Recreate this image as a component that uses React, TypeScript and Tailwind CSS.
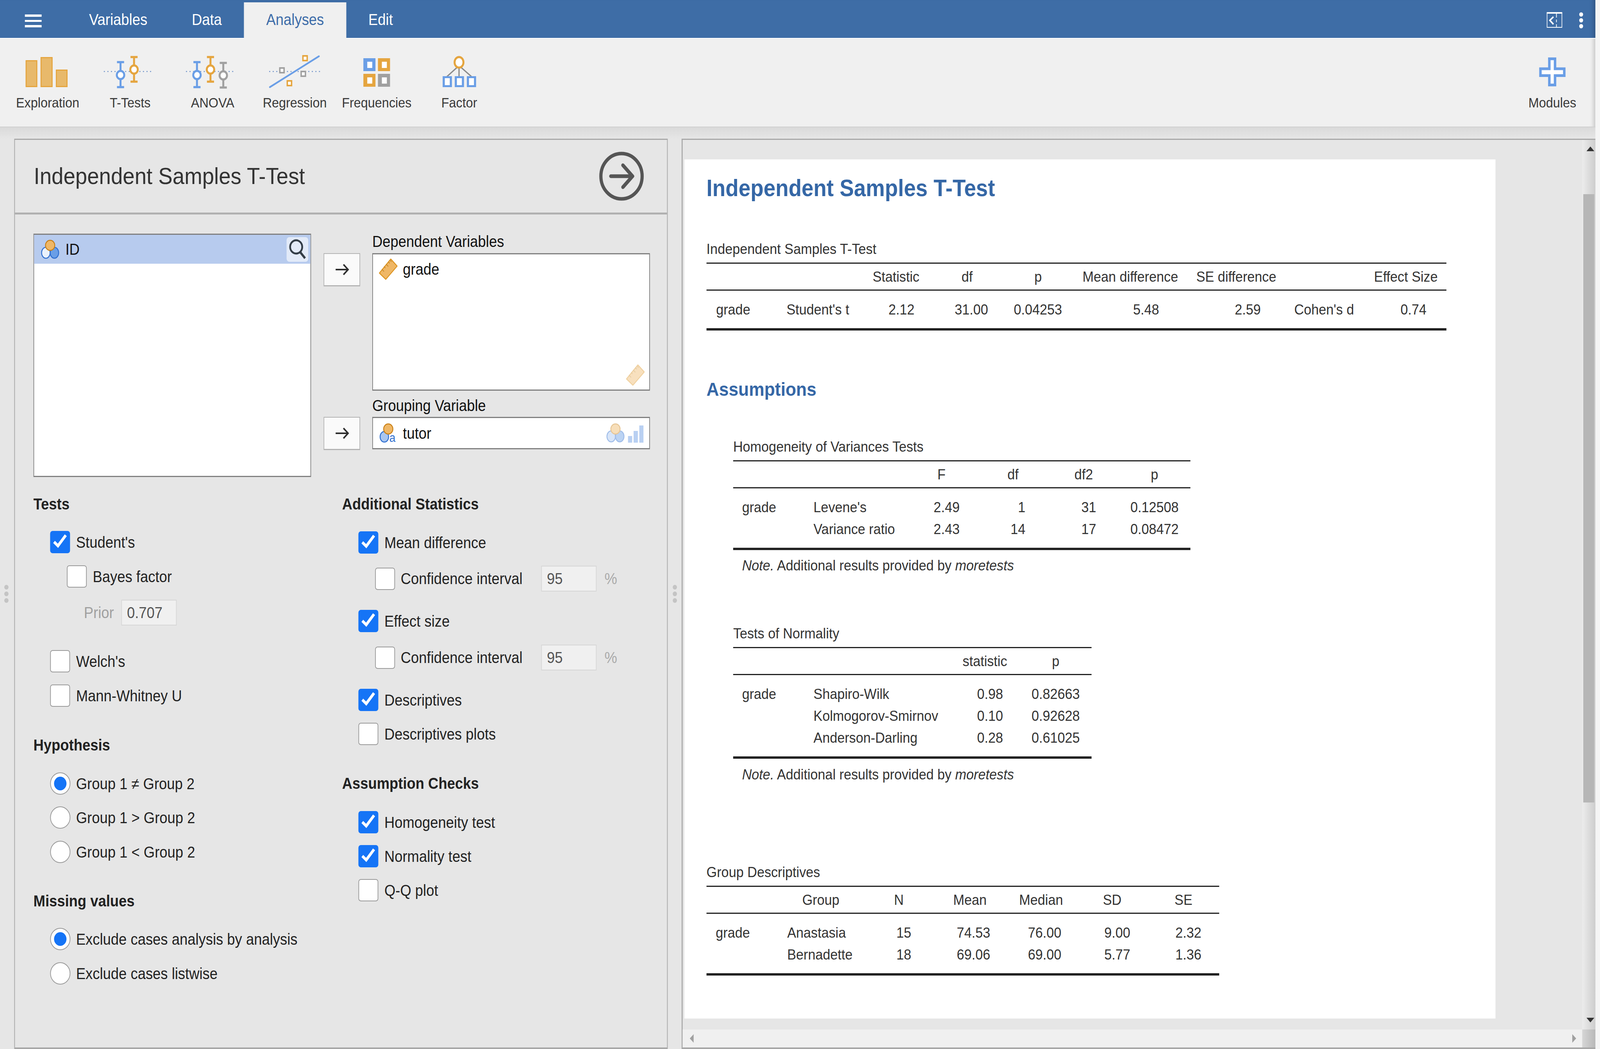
import type { ReactNode } from "react";

const BLUE = "#6a9ee6";
const ORANGE = "#e5a53f";
const GRAY = "#a0a0a0";

// coordinates in the ribbon icons are page pixels, the viewBox does the shifting
const ErrorBar = ({ x, top, cy, bottom, color }: { x: number; top: number; cy: number; bottom: number; color: string }) => (
  <g>
    <path d={`M${x} ${top}V${bottom}M${x - 10} ${top}H${x + 10}M${x - 10} ${bottom}H${x + 10}`} stroke={color} strokeWidth="5.5" fill="none" />
    <circle cx={x} cy={cy} r="10.5" fill="#fff" stroke={color} strokeWidth="5.5" />
  </g>
);

const Dotted = ({ from, to }: { from: number; to: number }) => (
  <path d={`M${from} 183H${to}`} stroke="#6a8fc8" strokeWidth="2.5" strokeDasharray="3 7" fill="none" />
);

const Sq = ({ x, y, color }: { x: number; y: number; color: string }) => (
  <rect x={x - 6} y={y - 6} width="12" height="12" fill="#fff" stroke={color} strokeWidth="4" />
);

const FreqBox = ({ x, y, color }: { x: number; y: number; color: string }) => (
  <g>
    <rect x={x} y={y} width="34" height="33" fill={color} />
    <rect x={x + 11} y={y + 9} width="14" height="16" fill="#fff" />
  </g>
);

const FactorBox = ({ x }: { x: number }) => (
  <g>
    <rect x={x} y="195" width="26" height="28" fill={BLUE} />
    <rect x={x + 6} y="200" width="14" height="18" fill="#fff" />
  </g>
);

const ExplorationIcon = () => (
  <svg className="w-[232px] h-[90px]" viewBox="18 140 232 90">
    <g fill="#e8b96b" stroke={ORANGE} strokeWidth="3">
      <rect x="73.5" y="155.5" width="30" height="66" />
      <rect x="115.5" y="147.5" width="31" height="74" />
      <rect x="158.5" y="179.5" width="30" height="42" />
    </g>
  </svg>
);

const TTestsIcon = () => (
  <svg className="w-[232px] h-[90px]" viewBox="250 140 232 90">
    <Dotted from={292} to={432} />
    <ErrorBar x={339} top={159} cy={192} bottom={223} color={BLUE} />
    <ErrorBar x={377} top={146} cy={178} bottom={209} color={ORANGE} />
  </svg>
);

const AnovaIcon = () => (
  <svg className="w-[232px] h-[90px]" viewBox="482 140 232 90">
    <Dotted from={523} to={663} />
    <ErrorBar x={554} top={159} cy={192} bottom={223} color={BLUE} />
    <ErrorBar x={592} top={146} cy={178} bottom={209} color={ORANGE} />
    <ErrorBar x={628} top={161} cy={193} bottom={224} color={GRAY} />
  </svg>
);

const RegressionIcon = () => (
  <svg className="w-[230px] h-[90px]" viewBox="714 140 230 90">
    <Dotted from={757} to={900} />
    <path d="M759 223L897 144" stroke={BLUE} strokeWidth="4.5" strokeLinecap="round" fill="none" />
    <Sq x={793} y={180} color={GRAY} />
    <Sq x={853} y={189} color={GRAY} />
    <Sq x={858} y={149} color={ORANGE} />
    <Sq x={814} y={213} color={ORANGE} />
  </svg>
);

const FrequenciesIcon = () => (
  <svg className="w-[231px] h-[90px]" viewBox="944 140 231 90">
    <FreqBox x={1022} y={149} color={BLUE} />
    <FreqBox x={1063} y={149} color={ORANGE} />
    <FreqBox x={1022} y={189} color={ORANGE} />
    <FreqBox x={1063} y={189} color={GRAY} />
  </svg>
);

const FactorIcon = () => (
  <svg className="w-[233px] h-[90px]" viewBox="1175 140 233 90">
    <path d="M1291 168L1257 196M1291 168V196M1291 168L1326 196" stroke="#8a8a8a" strokeWidth="3.5" fill="none" />
    <ellipse cx="1291" cy="159.5" rx="12.5" ry="13.5" fill="#fff" stroke={ORANGE} strokeWidth="5.5" />
    <FactorBox x={1245} />
    <FactorBox x={1279} />
    <FactorBox x={1313} />
  </svg>
);

const ModulesIcon = () => (
  <svg className="w-[232px] h-[90px]" viewBox="4250 140 232 90">
    <path
      d="M4357.5 150.5H4373.5V176H4399.5V193.5H4373.5V217.5H4357.5V193.5H4332.5V176H4357.5Z"
      fill="#fff"
      stroke={BLUE}
      strokeWidth="7"
    />
  </svg>
);

const RibbonButton = ({ icon, label, w }: { icon: ReactNode; label: string; w: string }) => (
  <div className={`flex flex-col items-center pt-[41px] ${w}`}>
    {icon}
    <div className="mt-[13px] h-[40px] leading-[40px] text-[35.6px] text-[#3a3a3a] whitespace-nowrap">{label}</div>
  </div>
);

const Tab = ({ label, active }: { label: string; active?: boolean }) => (
  <div
    className={
      active
        ? "mt-[6px] h-[93px] flex items-center pb-[5px] px-[62.5px] text-[40px] bg-[#f0f0f0] text-[#3e6da9] z-10"
        : "mt-[6px] h-[91px] flex items-center pb-[3px] px-[62.5px] text-[40px] text-white"
    }
  >
    {label}
  </div>
);

const Check = ({ on }: { on?: boolean }) =>
  on ? (
    <span className="w-[56px] h-[57px] shrink-0 rounded-[7px] bg-[#1574f6] flex items-center justify-center">
      <svg className="w-[56px] h-[57px]" viewBox="0 0 56 57">
        <path d="M11 28L22 38L44 11" stroke="#fff" strokeWidth="7.5" fill="none" />
      </svg>
    </span>
  ) : (
    <span className="w-[56px] h-[57px] shrink-0 rounded-[7px] bg-white border-2 border-[#999999]" />
  );

const Radio = ({ on }: { on?: boolean }) => (
  <span className="w-[57px] h-[57px] shrink-0 rounded-full bg-white border-2 border-[#999999] flex items-center justify-center">
    {on && <span className="w-[35px] h-[35px] rounded-full bg-[#1574f6]" />}
  </span>
);

const CheckRow = ({ on, label, className = "" }: { on?: boolean; label: string; className?: string }) => (
  <div className={`flex items-center gap-[17px] h-[57px] ${className}`}>
    <Check on={on} />
    <span>{label}</span>
  </div>
);

const RadioRow = ({ on, label, className = "" }: { on?: boolean; label: string; className?: string }) => (
  <div className={`flex items-center gap-[16px] h-[57px] ml-[47px] ${className}`}>
    <Radio on={on} />
    <span>{label}</span>
  </div>
);

const Heading = ({ children, className = "" }: { children: ReactNode; className?: string }) => (
  <div className={`h-[60px] flex items-center font-bold ${className}`}>{children}</div>
);

const DisabledInput = ({ value, className = "" }: { value: string; className?: string }) => (
  <div className={`h-[66px] w-[156px] flex items-center pl-[14px] bg-[#f0f0f0] border-2 border-[#d6d6d6] text-[#555555] ${className}`}>
    {value}
  </div>
);

const ConfidenceRow = ({ className = "" }: { className?: string }) => (
  <div className={`flex items-center h-[66px] ${className}`}>
    <Check />
    <span className="ml-[16px] w-[395px]">Confidence interval</span>
    <DisabledInput value="95" />
    <span className="ml-[22px] text-[#aaaaaa]">%</span>
  </div>
);

const Venn = ({ mode }: { mode: "id" | "nominal" | "faint" }) => {
  const opacity = mode === "faint" ? 0.45 : 1;
  return (
    <svg className="w-[52px] h-[49px] shrink-0 overflow-visible" viewBox="0 0 52 49" opacity={opacity}>
      {mode === "nominal" ? (
        <>
          <ellipse cx="15" cy="34" rx="12" ry="13.5" fill="#a9c6f0" stroke="#2f6fd0" strokeWidth="2.5" />
          <text x="29" y="47" fontSize="31" fill="#2f6fd0" fontFamily="Liberation Sans">a</text>
        </>
      ) : (
        <>
          <ellipse cx="14" cy="33" rx="12" ry="14" fill={mode === "faint" ? "#a9c6f0" : "#eaf1fc"} stroke="#2f6fd0" strokeWidth="2.5" />
          <ellipse cx="38" cy="33" rx="12" ry="14" fill={BLUE} stroke="#2f6fd0" strokeWidth="2.5" />
        </>
      )}
      <ellipse cx="26" cy="14" rx="13" ry="13" fill="#efb766" stroke="#c97f15" strokeWidth="2.5" />
    </svg>
  );
};

const Ruler = ({ faint }: { faint?: boolean }) => (
  <svg className="w-[52px] h-[54px] shrink-0" viewBox="0 0 52 54" opacity={faint ? 0.42 : 1}>
    <path d="M33 1L51 19L19 53L1 37Z" fill="#efb766" stroke="#dd9420" strokeWidth="2.5" />
    <path
      d="M26 8L30 12M20 14L26 20M14 20L18 24M8 27L14 33M31 4L35 8"
      stroke="#c98a2a"
      strokeWidth="2"
      fill="none"
    />
  </svg>
);

const TransferButton = () => (
  <div className="w-[103px] h-[85px] shrink-0 bg-[#fafafa] border-2 border-[#b4b4b4] border-b-[3px] flex items-center justify-center">
    <svg className="w-[40px] h-[30px]" viewBox="0 0 40 30">
      <path d="M2 15H36M24 2L37 15L24 28" stroke="#2e2e2e" strokeWidth="4" fill="none" />
    </svg>
  </div>
);

const Dots = () => (
  <div className="flex flex-col gap-[5px] items-center">
    <span className="w-[12px] h-[12px] rounded-full bg-[#c4c4c4]" />
    <span className="w-[12px] h-[12px] rounded-full bg-[#c4c4c4]" />
    <span className="w-[12px] h-[12px] rounded-full bg-[#c4c4c4]" />
  </div>
);

const OptionsPanel = () => (
  <div className="w-[1838px] h-full shrink-0 flex flex-col bg-[#e6e6e6] border-l-2 border-r-2 border-t-[3px] border-b-[4px] border-[#a8a8a8]">
    <div className="h-[191px] shrink-0 flex items-center justify-between border-b-[5px] border-[#b0b0b0] pl-[53px] pr-[65px]">
      <div className="text-[60px] text-[#333333]">Independent Samples T-Test</div>
      <svg className="w-[126px] h-[126px]" viewBox="0 0 126 126">
        <circle cx="63" cy="63" r="58" fill="none" stroke="#555555" strokeWidth="9" />
        <path d="M33 63H93M67 35L94 63L67 91" fill="none" stroke="#555555" strokeWidth="9.5" strokeLinecap="round" strokeLinejoin="round" />
      </svg>
    </div>

    <div className="pl-[52px] pt-[49px] text-[40px] text-[#222222]">
      <div className="flex items-start">
        <div className="w-[781px] h-[623px] shrink-0 bg-white border-2 border-y-[3px] border-[#808080]">
          <div className="h-[74px] flex items-center bg-[#b7cbee] pl-[19px] pr-[6px]">
            <Venn mode="id" />
            <span className="ml-[17px] text-[#111111]">ID</span>
            <div className="ml-auto w-[61px] h-[63px] rounded-[8px] bg-white/60 flex items-center justify-center">
              <svg className="w-[61px] h-[63px]" viewBox="0 0 61 63">
                <circle cx="27" cy="25" r="17" fill="none" stroke="#333d47" strokeWidth="5" />
                <path d="M38 38L52 54" stroke="#333d47" strokeWidth="6" fill="none" />
              </svg>
            </div>
          </div>
        </div>

        <div className="ml-[35px] flex flex-col">
          <div className="ml-[137px] h-[40px] leading-[40px] text-[#111111]">Dependent Variables</div>
          <div className="mt-[10px] flex items-start gap-[34px]">
            <TransferButton />
            <div className="relative w-[781px] h-[352px] bg-white border-2 border-y-[3px] border-[#808080]">
              <div className="h-[76px] flex items-center pl-[17px] gap-[15px] text-[#111111]">
                <Ruler />
                <span>grade</span>
              </div>
              <div className="absolute right-[13px] bottom-[10px]">
                <Ruler faint />
              </div>
            </div>
          </div>
          <div className="mt-[18px] ml-[137px] h-[40px] leading-[40px] text-[#111111]">Grouping Variable</div>
          <div className="mt-[9px] flex items-start gap-[34px]">
            <TransferButton />
            <div className="w-[781px] h-[83px] flex items-center bg-white border-2 border-y-[3px] border-[#808080] pl-[17px] pr-[16px] text-[#111111]">
              <Venn mode="nominal" />
              <span className="ml-[15px]">tutor</span>
              <div className="ml-auto flex items-end gap-[9px]">
                <Venn mode="faint" />
                <svg className="w-[44px] h-[44px]" viewBox="0 0 44 44">
                  <path d="M0 27H12V44H0ZM16 14H28V44H16ZM32 0H44V44H32Z" fill="#b9d0f2" />
                </svg>
              </div>
            </div>
          </div>
        </div>
      </div>

      <div className="mt-[39px] flex items-start">
        <div className="w-[868px] shrink-0">
          <Heading>Tests</Heading>
          <CheckRow on label="Student's" className="mt-[39px] ml-[47px]" />
          <CheckRow label="Bayes factor" className="mt-[31px] ml-[94px]" />
          <div className="mt-[31px] ml-[142px] flex items-center">
            <span className="text-[#a0a0a0] w-[105px]">Prior</span>
            <DisabledInput value="0.707" />
          </div>
          <CheckRow label="Welch's" className="mt-[63px] ml-[47px]" />
          <CheckRow label="Mann-Whitney U" className="mt-[31px] ml-[47px]" />
          <Heading className="mt-[68px]">Hypothesis</Heading>
          <RadioRow on label="Group 1 ≠ Group 2" className="mt-[40px]" />
          <RadioRow label="Group 1 > Group 2" className="mt-[30px]" />
          <RadioRow label="Group 1 < Group 2" className="mt-[31px]" />
          <Heading className="mt-[67px]">Missing values</Heading>
          <RadioRow on label="Exclude cases analysis by analysis" className="mt-[39px]" />
          <RadioRow label="Exclude cases listwise" className="mt-[31px]" />
        </div>

        <div className="flex-1">
          <Heading>Additional Statistics</Heading>
          <CheckRow on label="Mean difference" className="mt-[40px] ml-[46px]" />
          <ConfidenceRow className="mt-[31px] ml-[93px]" />
          <CheckRow on label="Effect size" className="mt-[47px] ml-[46px]" />
          <ConfidenceRow className="mt-[32px] ml-[93px]" />
          <CheckRow on label="Descriptives" className="mt-[47px] ml-[46px]" />
          <CheckRow label="Descriptives plots" className="mt-[30px] ml-[46px]" />
          <Heading className="mt-[68px]">Assumption Checks</Heading>
          <CheckRow on label="Homogeneity test" className="mt-[41px] ml-[46px]" />
          <CheckRow on label="Normality test" className="mt-[30px] ml-[46px]" />
          <CheckRow label="Q-Q plot" className="mt-[30px] ml-[46px]" />
        </div>
      </div>
    </div>
  </div>
);

type Col = { head: string; headClass: string; cellClass: string };

const ResultTable = ({ grid, cols, rows }: { grid: string; cols: Col[]; rows: string[][] }) => (
  <div className="border-t-[3px] border-b-[6px] border-[#222222]">
    <div className={`grid ${grid} h-[69px] items-center border-b-[3px] border-[#222222]`}>
      {cols.map((c, i) => (
        <div key={i} className={`${c.headClass} whitespace-nowrap`}>{c.head}</div>
      ))}
    </div>
    <div className="py-[20px]">
      {rows.map((row, r) => (
        <div key={r} className={`grid ${grid} h-[56px] items-center`}>
          {row.map((cell, i) => (
            <div key={i} className={`${cols[i].cellClass} whitespace-nowrap`}>{cell}</div>
          ))}
        </div>
      ))}
    </div>
  </div>
);

const TableTitle = ({ children }: { children: ReactNode }) => (
  <div className="h-[40px] leading-[40px] mb-[15px]">{children}</div>
);

const Note = ({ className = "" }: { className?: string }) => (
  <div className={`h-[40px] leading-[40px] pl-[25px] ${className}`}>
    <i>Note.</i> Additional results provided by <i>moretests</i>
  </div>
);

const ttestCols: Col[] = [
  { head: "", headClass: "", cellClass: "pl-[27px]" },
  { head: "", headClass: "", cellClass: "pl-[24px]" },
  { head: "Statistic", headClass: "text-center", cellClass: "text-right pr-[48px]" },
  { head: "df", headClass: "text-center", cellClass: "text-right pr-[41px]" },
  { head: "p", headClass: "text-center", cellClass: "text-right pr-[32px]" },
  { head: "Mean difference", headClass: "text-center", cellClass: "text-right pr-[79px]" },
  { head: "SE difference", headClass: "text-center", cellClass: "text-right pr-[69px]" },
  { head: "", headClass: "", cellClass: "pl-[25px]" },
  { head: "Effect Size", headClass: "text-center pr-[14px]", cellClass: "text-right pr-[56px]" },
];

const levCols: Col[] = [
  { head: "", headClass: "", cellClass: "pl-[25px]" },
  { head: "", headClass: "", cellClass: "pl-[25px]" },
  { head: "F", headClass: "text-center", cellClass: "text-right pr-[49px]" },
  { head: "df", headClass: "text-center", cellClass: "text-right pr-[66px]" },
  { head: "df2", headClass: "text-center", cellClass: "text-right pr-[63px]" },
  { head: "p", headClass: "text-center", cellClass: "text-right pr-[33px]" },
];

const normCols: Col[] = [
  { head: "", headClass: "", cellClass: "pl-[25px]" },
  { head: "", headClass: "", cellClass: "pl-[25px]" },
  { head: "statistic", headClass: "text-center", cellClass: "text-right pr-[47px]" },
  { head: "p", headClass: "text-center", cellClass: "text-right pr-[33px]" },
];

const descCols: Col[] = [
  { head: "", headClass: "", cellClass: "pl-[26px]" },
  { head: "Group", headClass: "text-center", cellClass: "pl-[25px]" },
  { head: "N", headClass: "text-center", cellClass: "text-right pr-[65px]" },
  { head: "Mean", headClass: "text-center", cellClass: "text-right pr-[43px]" },
  { head: "Median", headClass: "text-center", cellClass: "text-right pr-[43px]" },
  { head: "SD", headClass: "text-center", cellClass: "text-right pr-[49px]" },
  { head: "SE", headClass: "text-center", cellClass: "text-right pr-[50px]" },
];

const ResultsPage = () => (
  <div className="w-[2281px] h-[2199px] bg-white pl-[62px] pt-[39px] text-[37.6px] text-[#333333] overflow-hidden">
    <div className="h-[70px] leading-[70px] text-[60.2px] font-bold text-[#3567a6]">Independent Samples T-Test</div>

    <div className="mt-[100px] w-[2081px]">
      <TableTitle>Independent Samples T-Test</TableTitle>
      <ResultTable
        grid="grid-cols-[201px_232px_200px_200px_199px_320px_276px_239px_214px]"
        cols={ttestCols}
        rows={[["grade", "Student's t", "2.12", "31.00", "0.04253", "5.48", "2.59", "Cohen's d", "0.74"]]}
      />
    </div>

    <div className="mt-[120px] h-[60px] leading-[60px] text-[48.8px] font-bold text-[#3567a6]">Assumptions</div>

    <div className="ml-[75px]">
      <div className="mt-[97px] w-[1286px]">
        <TableTitle>Homogeneity of Variances Tests</TableTitle>
        <ResultTable
          grid="grid-cols-[201px_285px_200px_202px_196px_202px]"
          cols={levCols}
          rows={[
            ["grade", "Levene's", "2.49", "1", "31", "0.12508"],
            ["", "Variance ratio", "2.43", "14", "17", "0.08472"],
          ]}
        />
      </div>
      <Note className="mt-[19px]" />

      <div className="mt-[134px] w-[1008px]">
        <TableTitle>Tests of Normality</TableTitle>
        <ResultTable
          grid="grid-cols-[201px_409px_196px_202px]"
          cols={normCols}
          rows={[
            ["grade", "Shapiro-Wilk", "0.98", "0.82663"],
            ["", "Kolmogorov-Smirnov", "0.10", "0.92628"],
            ["", "Anderson-Darling", "0.28", "0.61025"],
          ]}
        />
      </div>
      <Note className="mt-[20px]" />
    </div>

    <div className="mt-[210px] w-[1442px]">
      <TableTitle>Group Descriptives</TableTitle>
      <ResultTable
        grid="grid-cols-[202px_239px_200px_200px_200px_200px_201px]"
        cols={descCols}
        rows={[
          ["grade", "Anastasia", "15", "74.53", "76.00", "9.00", "2.32"],
          ["", "Bernadette", "18", "69.06", "69.00", "5.77", "1.36"],
        ]}
      />
    </div>
  </div>
);

const ResultsPanel = () => (
  <div className="flex-1 h-full flex flex-col bg-[#e6e6e6] border-l-[3px] border-t-[3px] border-b-[4px] border-[#a8a8a8]">
    <div className="flex-1 flex min-h-0">
      <div className="flex-1 pl-[5px] pt-[50px]">
        <ResultsPage />
      </div>
      <div className="w-[37px] flex flex-col items-center bg-gradient-to-r from-[#ececec] to-[#cdcdcd]">
        <svg className="w-[22px] h-[12px] mt-[17px] self-end mr-[3px]" viewBox="0 0 22 12">
          <path d="M11 0L22 12H0Z" fill="#333333" />
        </svg>
        <div className="w-[31px] h-[1557px] mt-[110px] bg-[#b6b6b6]" />
        <svg className="w-[22px] h-[12px] mt-[551px] self-end mr-[3px]" viewBox="0 0 22 12">
          <path d="M11 12L22 0H0Z" fill="#333333" />
        </svg>
      </div>
    </div>
    <div className="h-[46px] shrink-0 flex">
      <div className="flex-1 flex items-center justify-between bg-[#f0f0f0] pl-[20px] pr-[17px]">
        <svg className="w-[11px] h-[22px]" viewBox="0 0 11 22">
          <path d="M11 0L0 11L11 22Z" fill="#a0a0a0" />
        </svg>
        <svg className="w-[11px] h-[22px]" viewBox="0 0 11 22">
          <path d="M0 0L11 11L0 22Z" fill="#a0a0a0" />
        </svg>
      </div>
      <div className="w-[37px] bg-gradient-to-r from-[#d6d6d6] to-[#b8b8b8]" />
    </div>
  </div>
);

export default function App() {
  // the browser may open narrower than the 4500px reference, so fit the page to the window width
  const fit = window.innerWidth / 4500;
  return (
    <div className="w-screen h-[2685px] overflow-hidden">
      <div
        className="w-[4500px] h-[2685px] flex origin-top-left bg-[#f5f5f5] font-['Liberation_Sans',sans-serif]"
        style={{ transform: `scaleX(${fit})` }}
      >
        <div className="w-[4487px] h-full shrink-0 flex flex-col">
          {/* top bar */}
          <div className="h-[97px] shrink-0 flex items-start bg-[#3e6da6] shadow-[inset_-14px_0_12px_-10px_rgba(0,0,0,0.25)]">
            <div className="ml-[70px] mt-[37px] w-[47px] flex flex-col gap-[8px]">
              <span className="h-[5.5px] bg-white" />
              <span className="h-[5.5px] bg-white" />
              <span className="h-[5.5px] bg-white" />
            </div>
            <div className="ml-[71px] flex">
              <Tab label="Variables" />
              <Tab label="Data" />
              <Tab label="Analyses" active />
              <Tab label="Edit" />
            </div>
            <div className="ml-auto mt-[31px] mr-[34px] flex items-start gap-[47px]">
              <svg className="w-[44px] h-[40px]" viewBox="0 0 44 40">
                <path d="M1 2H43V39H1Z" fill="none" stroke="#fff" strokeWidth="2" />
                <path d="M0 2H44" stroke="#fff" strokeWidth="4" />
                <path d="M27.5 2V14M27.5 19V26M27.5 31V39" stroke="#fff" strokeWidth="2" />
                <path d="M19 12L9 21L19 31" fill="none" stroke="#fff" strokeWidth="4" />
              </svg>
              <svg className="w-[12px] h-[42px]" viewBox="0 0 12 42">
                <circle cx="6" cy="6" r="5.5" fill="#fff" />
                <circle cx="6" cy="21" r="5.5" fill="#fff" />
                <circle cx="6" cy="36" r="5.5" fill="#fff" />
              </svg>
            </div>
          </div>

          {/* ribbon */}
          <div className="h-[229px] shrink-0 flex bg-[#f0f0f0] border-t-2 border-white border-b-2 border-b-[#cfcfcf] pl-[18px] pr-[5px] shadow-[inset_-14px_0_12px_-10px_rgba(0,0,0,0.2)]">
            <RibbonButton w="w-[232px]" icon={<ExplorationIcon />} label="Exploration" />
            <RibbonButton w="w-[232px]" icon={<TTestsIcon />} label="T-Tests" />
            <RibbonButton w="w-[232px]" icon={<AnovaIcon />} label="ANOVA" />
            <RibbonButton w="w-[230px]" icon={<RegressionIcon />} label="Regression" />
            <RibbonButton w="w-[231px]" icon={<FrequenciesIcon />} label="Frequencies" />
            <RibbonButton w="w-[233px]" icon={<FactorIcon />} label="Factor" />
            <div className="ml-auto">
              <RibbonButton w="w-[232px]" icon={<ModulesIcon />} label="Modules" />
            </div>
          </div>

          <div className="h-[29px] shrink-0 bg-gradient-to-b from-[#dadada] to-[#e6e6e6]" />

          {/* panels */}
          <div className="flex-1 min-h-0 flex bg-[#e6e6e6]">
            <div className="w-[40px] shrink-0 flex items-center justify-center pr-[4px]">
              <Dots />
            </div>
            <OptionsPanel />
            <div className="w-[39px] shrink-0 flex items-center justify-center">
              <Dots />
            </div>
            <ResultsPanel />
          </div>
        </div>
      </div>
    </div>
  );
}
